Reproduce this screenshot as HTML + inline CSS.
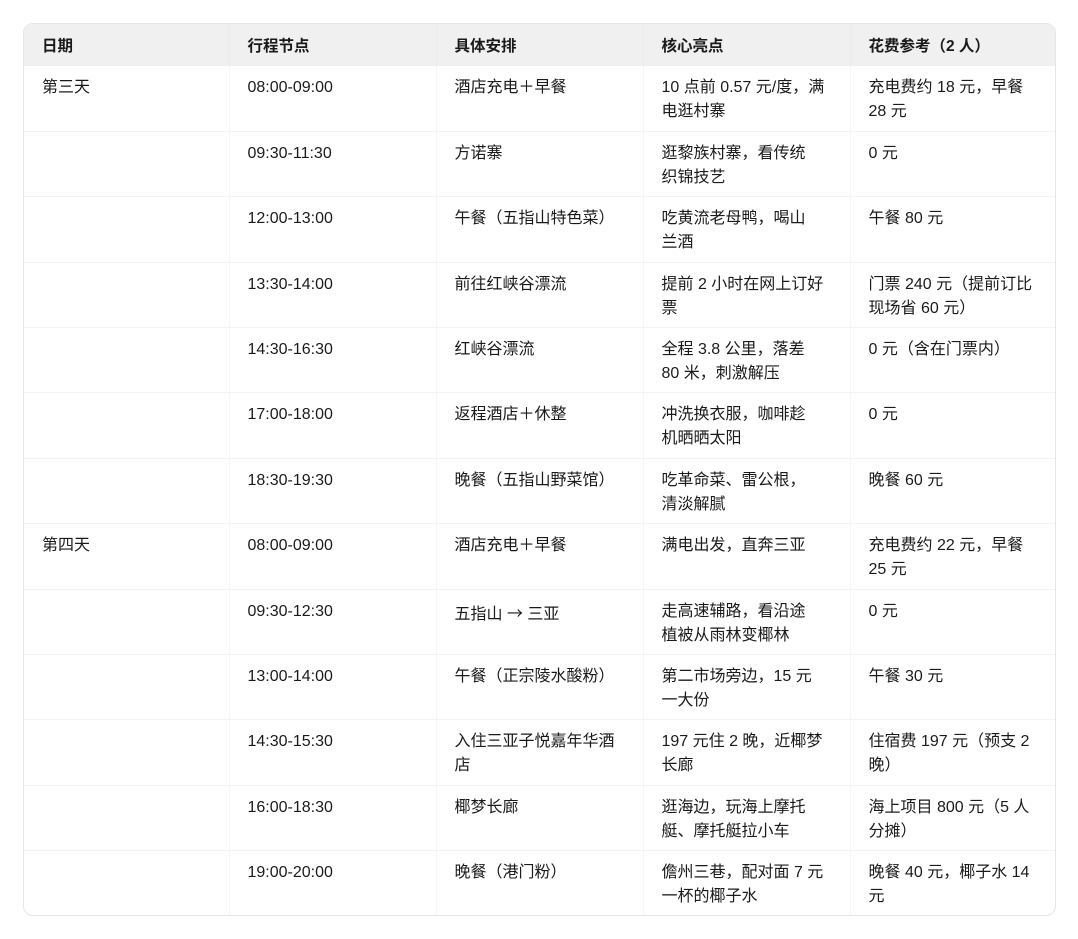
<!DOCTYPE html>
<html><head><meta charset="utf-8"><style>
body{margin:0;background:#fff;font-family:"Liberation Sans","Noto Sans CJK SC",sans-serif;color:#1a1a1a;}
.wrap{position:absolute;left:23px;top:23px;width:1031px;height:891px;border:1px solid #e6e6e6;border-radius:10px;overflow:hidden;}
table{border-collapse:collapse;table-layout:fixed;width:1031px;font-size:16px;}
col.a{width:205px}col.b{width:207px}col.c{width:207px}col.d{width:207px}col.e{width:205px}
th{background:#f0f0f0;height:42px;text-align:left;font-weight:bold;padding:0 18px;font-size:15.5px;border-right:1px solid #ebebeb;}
td{height:65.4px;vertical-align:top;padding:10px 0 0 18px;line-height:24px;box-sizing:border-box;border-bottom:1px solid #f3f3f3;border-right:1px solid #f6f6f6;white-space:nowrap;}
th:last-child,td:last-child{border-right:none}
tr:last-child td{border-bottom:none}
</style></head><body><div class="wrap"><table>
<colgroup><col class="a"><col class="b"><col class="c"><col class="d"><col class="e"></colgroup>
<tr><th>日期</th><th>行程节点</th><th>具体安排</th><th>核心亮点</th><th>花费参考（2 人）</th></tr>
<tr><td>第三天</td><td>08:00-09:00</td><td>酒店充电＋早餐</td><td>10 点前 0.57 元/度，满<br>电逛村寨</td><td>充电费约 18 元，早餐<br>28 元</td></tr>
<tr><td></td><td>09:30-11:30</td><td>方诺寨</td><td>逛黎族村寨，看传统<br>织锦技艺</td><td>0 元</td></tr>
<tr><td></td><td>12:00-13:00</td><td>午餐（五指山特色菜）</td><td>吃黄流老母鸭，喝山<br>兰酒</td><td>午餐 80 元</td></tr>
<tr><td></td><td>13:30-14:00</td><td>前往红峡谷漂流</td><td>提前 2 小时在网上订好<br>票</td><td>门票 240 元（提前订比<br>现场省 60 元）</td></tr>
<tr><td></td><td>14:30-16:30</td><td>红峡谷漂流</td><td>全程 3.8 公里，落差<br>80 米，刺激解压</td><td>0 元（含在门票内）</td></tr>
<tr><td></td><td>17:00-18:00</td><td>返程酒店＋休整</td><td>冲洗换衣服，咖啡趁<br>机晒晒太阳</td><td>0 元</td></tr>
<tr><td></td><td>18:30-19:30</td><td>晚餐（五指山野菜馆）</td><td>吃革命菜、雷公根，<br>清淡解腻</td><td>晚餐 60 元</td></tr>
<tr><td>第四天</td><td>08:00-09:00</td><td>酒店充电＋早餐</td><td>满电出发，直奔三亚</td><td>充电费约 22 元，早餐<br>25 元</td></tr>
<tr><td></td><td>09:30-12:30</td><td>五指山 <span style="font-family:'Noto Sans CJK SC'">→</span> 三亚</td><td>走高速辅路，看沿途<br>植被从雨林变椰林</td><td>0 元</td></tr>
<tr><td></td><td>13:00-14:00</td><td>午餐（正宗陵水酸粉）</td><td>第二市场旁边，15 元<br>一大份</td><td>午餐 30 元</td></tr>
<tr><td></td><td>14:30-15:30</td><td>入住三亚子悦嘉年华酒<br>店</td><td>197 元住 2 晚，近椰梦<br>长廊</td><td>住宿费 197 元（预支 2<br>晚）</td></tr>
<tr><td></td><td>16:00-18:30</td><td>椰梦长廊</td><td>逛海边，玩海上摩托<br>艇、摩托艇拉小车</td><td>海上项目 800 元（5 人<br>分摊）</td></tr>
<tr><td></td><td>19:00-20:00</td><td>晚餐（港门粉）</td><td>儋州三巷，配对面 7 元<br>一杯的椰子水</td><td>晚餐 40 元，椰子水 14<br>元</td></tr>
</table></div></body></html>
